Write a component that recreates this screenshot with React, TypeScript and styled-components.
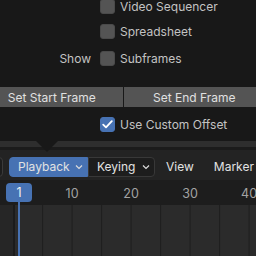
import React from 'react';
import styled, { createGlobalStyle } from 'styled-components';

const Global = createGlobalStyle`
  html, body { margin: 0; padding: 0; background: #181818; }
  body { font-family: Inter, "Noto Sans", sans-serif; overflow: hidden; }
`;

const Screen = styled.div`
  width: 256px;
  height: 256px;
  position: relative;
  overflow: hidden;
  display: flex;
  flex-direction: column;
  background: #181818;
`;

const Popup = styled.div`
  height: 141px;
  flex-shrink: 0;
  display: flex;
  flex-direction: column;
  background: #181818;
  color: #c3c3c3;
  font-size: 12px;
`;

const OptRow = styled.div<{ $h: number; $lift?: number }>`
  height: ${p => p.$h}px;
  margin-top: ${p => -(p.$lift || 0)}px;
  flex-shrink: 0;
  display: grid;
  grid-template-columns: 100px 1fr;
  align-items: center;
`;

const Label = styled.div`
  text-align: right;
  padding-right: 9px;
`;

const Check = styled.label`
  display: flex;
  align-items: center;
  gap: 5px;
  white-space: nowrap;
`;

const Box = styled.span<{ $on?: boolean }>`
  width: 15px;
  height: 15px;
  flex-shrink: 0;
  box-sizing: border-box;
  border-radius: 3px;
  background: ${p => (p.$on ? '#4772b3' : '#545454')};
  border: 1px solid ${p => (p.$on ? '#4772b3' : '#4a4a4a')};
  display: flex;
  align-items: center;
  justify-content: center;
`;

const ButtonRow = styled.div`
  display: flex;
  gap: 1px;
  margin: 14px -9px 0 -19px;
  height: 20px;
  flex-shrink: 0;
`;

const Btn = styled.div`
  flex: 1;
  background: #545454;
  color: #e0e0e0;
  display: flex;
  align-items: center;
  justify-content: center;
`;

const Timeline = styled.div`
  flex: 1;
  display: flex;
  flex-direction: column;
  position: relative;
  background: #2b2b2b;
`;

const Strip = styled.div`
  height: 6px;
  flex-shrink: 0;
  background: #2e2e2e;
  border-bottom: 3px solid #1b1b1b;
`;

const Header = styled.div`
  height: 30px;
  flex-shrink: 0;
  background: #232323;
  display: flex;
  align-items: center;
  padding-top: 3px;
  box-sizing: border-box;
  color: #e2e2e2;
  font-size: 12px;
  white-space: nowrap;
`;

const Stub = styled.div`
  width: 12px;
  height: 20px;
  flex-shrink: 0;
  margin-left: -9px;
  border: 1px solid #3a3a3a;
  border-radius: 4px;
  background: #1d1d1d;
  box-sizing: border-box;
`;

const MenuGroup = styled.div`
  display: flex;
  flex-shrink: 0;
  margin-left: 6px;
  height: 20px;
`;

const Menu = styled.div<{ $active?: boolean; $first?: boolean; $w: number }>`
  width: ${p => p.$w}px;
  flex-shrink: 0;
  display: flex;
  align-items: center;
  justify-content: space-between;
  padding: 0 4px 0 8px;
  box-sizing: border-box;
  background: ${p => (p.$active ? '#4772b3' : '#1d1d1d')};
  border: 1px solid ${p => (p.$active ? '#4772b3' : '#383838')};
  border-radius: ${p => (p.$first ? '4px 0 0 4px' : '0 4px 4px 0')};
`;

const Plain = styled.div`
  flex-shrink: 0;
  padding: 0 9px;
  margin-left: 2px;
`;

const Ruler = styled.div`
  height: 25px;
  flex-shrink: 0;
  background: #1d1d1d;
  position: relative;
  color: #a3a3a3;
  font-size: 12.5px;
`;

const Tick = styled.span`
  position: absolute;
  top: 6px;
  transform: translateX(-50%);
`;

const Current = styled.div`
  position: absolute;
  left: 6px;
  top: 3px;
  width: 26px;
  height: 19px;
  border-radius: 4px;
  background: #4772b3;
  color: #f0f0f0;
  display: flex;
  align-items: center;
  justify-content: center;
`;

const Body = styled.div`
  flex: 1;
  display: flex;
`;

const SideRegion = styled.div`
  width: 13px;
  flex-shrink: 0;
  background: #262626;
  border-right: 2px solid #1b1b1b;
`;

const Grid = styled.svg`
  flex: 1;
  display: block;
`;

const Playhead = styled.div`
  position: absolute;
  left: 18px;
  top: 61px;
  bottom: 0;
  width: 2px;
  background: #4772b3;
`;

const Arrow = styled.svg`
  position: absolute;
  left: 36px;
  top: 141px;
`;

const Chevron = () => (
  <svg width="8" height="6" viewBox="0 0 8 6">
    <path d="M1 1.5 L4 4.5 L7 1.5" stroke="#dcdcdc" strokeWidth="1.2" fill="none" />
  </svg>
);

const frameX = (f: number) => 19 + (f - 1) * 5.9;

const App = () => {
  const lines = [5, 10, 15, 20, 25, 30, 35, 40];
  return (
    <Screen>
      <Global />
      <Popup>
        <OptRow $h={25} $lift={6}>
          <span />
          <Check><Box />Video Sequencer</Check>
        </OptRow>
        <OptRow $h={25}>
          <span />
          <Check><Box />Spreadsheet</Check>
        </OptRow>
        <OptRow $h={29}>
          <Label>Show</Label>
          <Check><Box />Subframes</Check>
        </OptRow>
        <ButtonRow>
          <Btn>Set Start Frame</Btn>
          <Btn>Set End Frame</Btn>
        </ButtonRow>
        <OptRow $h={34}>
          <span />
          <Check>
            <Box $on>
              <svg width="11" height="9" viewBox="0 0 11 9">
                <path d="M1.2 4.6 L4 7.4 L9.8 1.2" stroke="#fff" strokeWidth="1.8" fill="none" strokeLinecap="round" strokeLinejoin="round" />
              </svg>
            </Box>
            Use Custom Offset
          </Check>
        </OptRow>
      </Popup>
      <Timeline>
        <Strip />
        <Header>
          <Stub />
          <MenuGroup>
            <Menu $active $first $w={79}>Playback <Chevron /></Menu>
            <Menu $w={67}>Keying <Chevron /></Menu>
          </MenuGroup>
          <Plain>View</Plain>
          <Plain>Marker</Plain>
        </Header>
        <Ruler>
          {[10, 20, 30, 40].map(f => (
            <Tick key={f} style={{ left: frameX(f) }}>{f}</Tick>
          ))}
          <Current>1</Current>
        </Ruler>
        <Body>
          <SideRegion />
          <Grid viewBox="0 0 241 51" preserveAspectRatio="none">
            {lines.map(f => (
              <rect key={f} x={frameX(f) - 15.5} y={0} width={1} height={51} fill="#1e1e1e" />
            ))}
          </Grid>
        </Body>
        <Playhead />
      </Timeline>
      <Arrow width="22" height="12" viewBox="0 0 22 12">
        <path d="M0 0 L22 0 L11 11 Z" fill="#181818" />
      </Arrow>
    </Screen>
  );
};

export default App;
